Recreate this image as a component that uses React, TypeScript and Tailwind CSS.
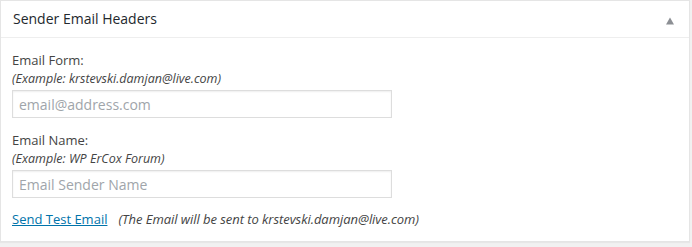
export default function App() {
  return (
    <div className="w-[692px] h-[247px] bg-[#f1f1f1] font-['Open_Sans',sans-serif] text-[#444]">
      <div className="w-[690px] h-[242px] bg-white border border-[#e5e5e5] shadow-[0_1px_1px_rgba(0,0,0,0.04)]">
        <div className="flex items-center justify-between h-[37px] pl-3 pr-[14px] border-b border-[#eeeeee]">
          <h2 className="text-[14px] font-medium text-[#23282d] leading-[20px]">Sender Email Headers</h2>
          <svg width="10" height="8" viewBox="0 0 10 8" className="mt-[3px]">
            <polygon points="5,0.5 9,7.5 1,7.5" fill="#8c8f94" />
          </svg>
        </div>
        <div className="px-[11px] pt-3">
          <div className="flex flex-col">
            <label className="text-[13px] leading-[20px]">Email Form:</label>
            <em className="text-[12.5px] leading-[18px]">(Example: krstevski.damjan@live.com)</em>
            <input
              type="text"
              placeholder="email@address.com"
              className="mt-[2px] w-[380px] h-[28px] border border-[#dddddd] px-[6px] text-[14px] placeholder:text-[#a0a5aa] outline-none shadow-[inset_0_1px_2px_rgba(0,0,0,0.07)]"
            />
          </div>
          <div className="flex flex-col mt-3">
            <label className="text-[13px] leading-[20px]">Email Name:</label>
            <em className="text-[12.5px] leading-[18px]">(Example: WP ErCox Forum)</em>
            <input
              type="text"
              placeholder="Email Sender Name"
              className="mt-[2px] w-[380px] h-[28px] border border-[#dddddd] px-[6px] text-[14px] placeholder:text-[#a0a5aa] outline-none shadow-[inset_0_1px_2px_rgba(0,0,0,0.07)]"
            />
          </div>
          <p className="mt-[11px] text-[13px] leading-[20px]">
            <a href="#" className="text-[#0073aa] underline">Send Test Email</a>
            <em className="ml-[11px] tracking-[-0.05px]">(The Email will be sent to krstevski.damjan@live.com)</em>
          </p>
        </div>
      </div>
    </div>
  );
}
